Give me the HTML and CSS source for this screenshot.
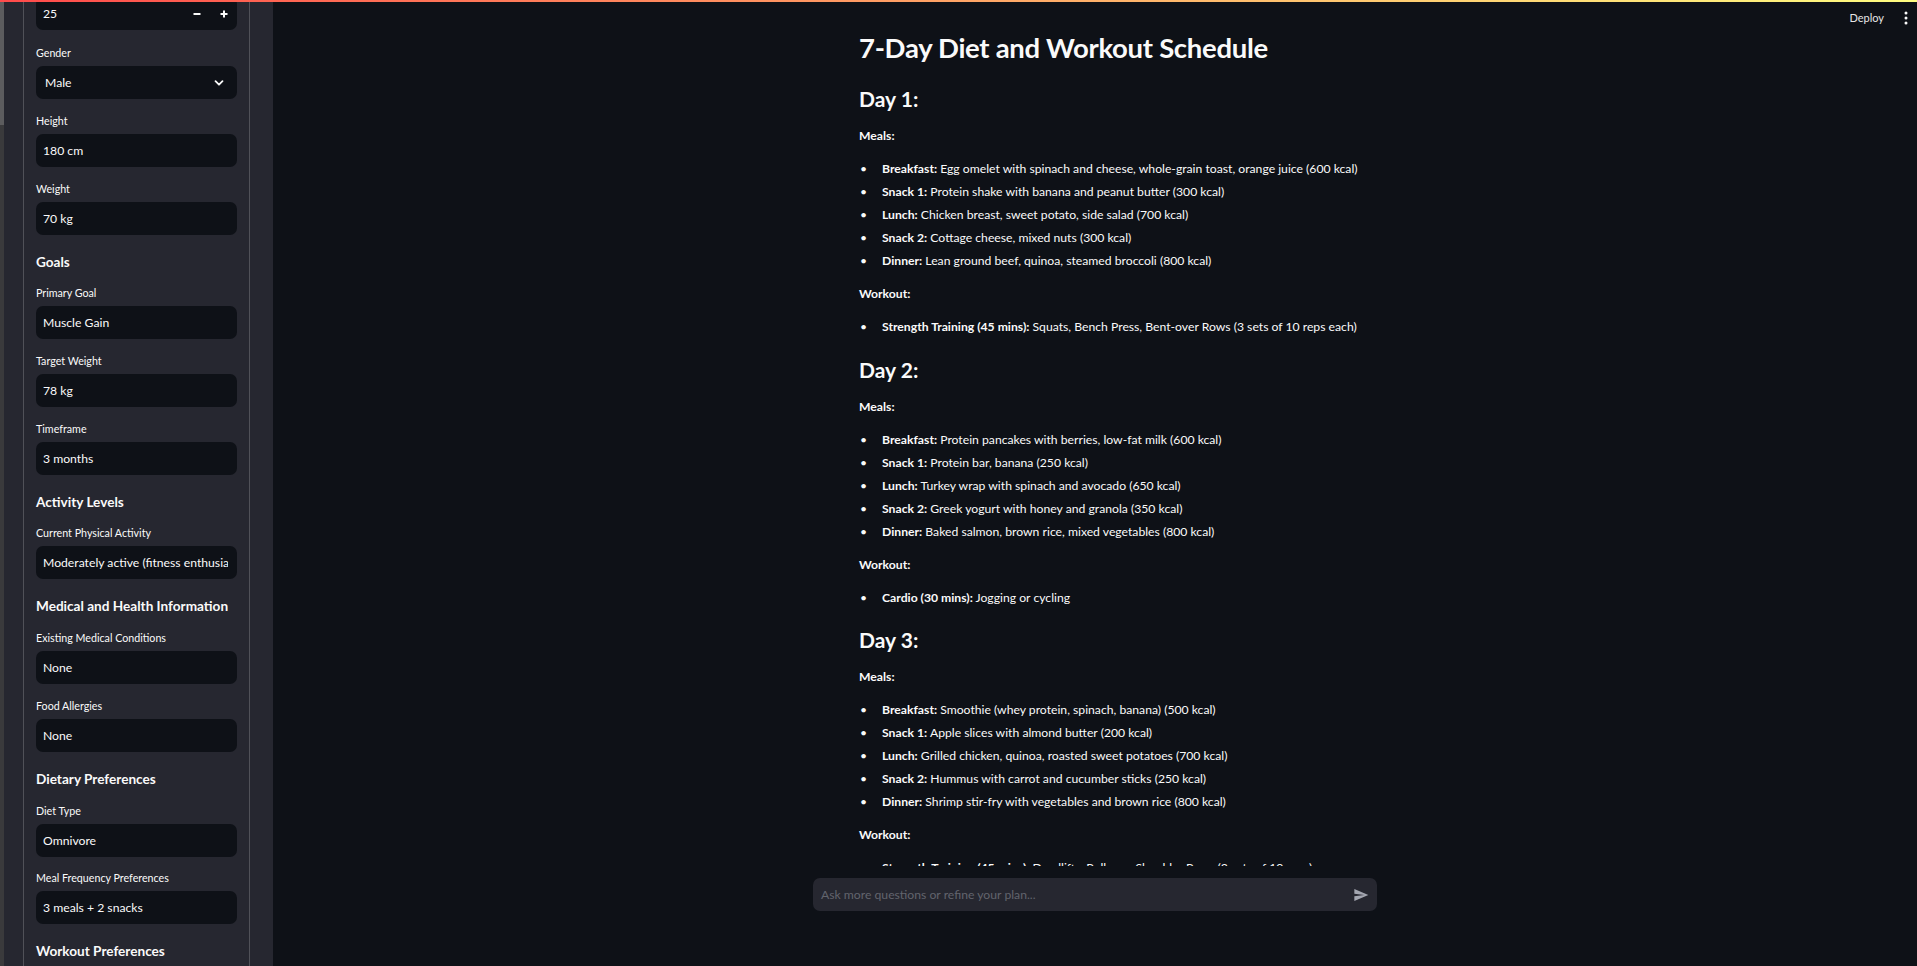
FILE: index.html
```html
<!DOCTYPE html>
<html lang="en">
<head>
<meta charset="utf-8">
<title>AI Diet and Workout Planner</title>
<link rel="stylesheet" href="styles.css">
</head>
<body>
<div class="decoration"></div>
<div class="app">
  <aside class="sidebar">
    <div class="scroll-track"><div class="scroll-thumb"></div></div>
    <div class="sidebar-body">
      <div class="panel">
        <div class="field">
          <label class="field-label">Age</label>
          <div class="input number">
            <span class="value">25</span>
            <span class="step"><svg width="8" height="8" viewBox="0 0 8 8"><rect x="0.5" y="3" width="7" height="2" fill="#fafafa"/></svg></span>
            <span class="step"><svg width="8" height="8" viewBox="0 0 8 8"><rect x="0.5" y="3" width="7" height="2" fill="#fafafa"/><rect x="3" y="0.5" width="2" height="7" fill="#fafafa"/></svg></span>
          </div>
        </div>
        <div class="field after-number">
          <label class="field-label">Gender</label>
          <div class="input select">
            <span class="value">Male</span>
            <svg class="chevron" width="10" height="8" viewBox="0 0 10 8"><path d="M1.5 2.2 5 5.7 8.5 2.2" fill="none" stroke="#fafafa" stroke-width="1.8" stroke-linecap="round" stroke-linejoin="round"/></svg>
          </div>
        </div>
        <div class="field">
          <label class="field-label">Height</label>
          <div class="input"><span class="value">180 cm</span></div>
        </div>
        <div class="field">
          <label class="field-label">Weight</label>
          <div class="input"><span class="value">70 kg</span></div>
        </div>

        <div class="group-title">Goals</div>
        <div class="field">
          <label class="field-label">Primary Goal</label>
          <div class="input"><span class="value">Muscle Gain</span></div>
        </div>
        <div class="field">
          <label class="field-label">Target Weight</label>
          <div class="input"><span class="value">78 kg</span></div>
        </div>
        <div class="field">
          <label class="field-label">Timeframe</label>
          <div class="input"><span class="value">3 months</span></div>
        </div>

        <div class="group-title">Activity Levels</div>
        <div class="field">
          <label class="field-label">Current Physical Activity</label>
          <div class="input"><span class="value">Moderately active (fitness enthusiast, works out 3-4 times a week)</span></div>
        </div>

        <div class="group-title">Medical and Health Information</div>
        <div class="field">
          <label class="field-label">Existing Medical Conditions</label>
          <div class="input"><span class="value">None</span></div>
        </div>
        <div class="field">
          <label class="field-label">Food Allergies</label>
          <div class="input"><span class="value">None</span></div>
        </div>

        <div class="group-title">Dietary Preferences</div>
        <div class="field">
          <label class="field-label">Diet Type</label>
          <div class="input"><span class="value">Omnivore</span></div>
        </div>
        <div class="field">
          <label class="field-label">Meal Frequency Preferences</label>
          <div class="input"><span class="value">3 meals + 2 snacks</span></div>
        </div>

        <div class="group-title">Workout Preferences</div>
        <div class="field">
          <label class="field-label">Preferred Workout Type</label>
          <div class="input"><span class="value">Strength training</span></div>
        </div>
      </div>
    </div>
  </aside>

  <main class="main">
    <header class="toolbar">
      <span class="deploy">Deploy</span>
      <svg class="kebab" width="4" height="14" viewBox="0 0 4 14"><circle cx="2" cy="2" r="1.5" fill="#fafafa"/><circle cx="2" cy="7" r="1.5" fill="#fafafa"/><circle cx="2" cy="12" r="1.5" fill="#fafafa"/></svg>
    </header>

    <div class="scroll-area">
      <div class="column">
        <article class="message">
          <h2 class="title">7-Day Diet and Workout Schedule</h2>

          <h3 class="day">Day 1:</h3>
          <p class="section"><strong>Meals:</strong></p>
          <ul class="items">
            <li><strong>Breakfast:</strong> Egg omelet with spinach and cheese, whole-grain toast, orange juice (600 kcal)</li>
            <li><strong>Snack 1:</strong> Protein shake with banana and peanut butter (300 kcal)</li>
            <li><strong>Lunch:</strong> Chicken breast, sweet potato, side salad (700 kcal)</li>
            <li><strong>Snack 2:</strong> Cottage cheese, mixed nuts (300 kcal)</li>
            <li><strong>Dinner:</strong> Lean ground beef, quinoa, steamed broccoli (800 kcal)</li>
          </ul>
          <p class="section"><strong>Workout:</strong></p>
          <ul class="items">
            <li><strong>Strength Training (45 mins):</strong> Squats, Bench Press, Bent-over Rows (3 sets of 10 reps each)</li>
          </ul>

          <h3 class="day">Day 2:</h3>
          <p class="section"><strong>Meals:</strong></p>
          <ul class="items">
            <li><strong>Breakfast:</strong> Protein pancakes with berries, low-fat milk (600 kcal)</li>
            <li><strong>Snack 1:</strong> Protein bar, banana (250 kcal)</li>
            <li><strong>Lunch:</strong> Turkey wrap with spinach and avocado (650 kcal)</li>
            <li><strong>Snack 2:</strong> Greek yogurt with honey and granola (350 kcal)</li>
            <li><strong>Dinner:</strong> Baked salmon, brown rice, mixed vegetables (800 kcal)</li>
          </ul>
          <p class="section"><strong>Workout:</strong></p>
          <ul class="items">
            <li><strong>Cardio (30 mins):</strong> Jogging or cycling</li>
          </ul>

          <h3 class="day">Day 3:</h3>
          <p class="section"><strong>Meals:</strong></p>
          <ul class="items">
            <li><strong>Breakfast:</strong> Smoothie (whey protein, spinach, banana) (500 kcal)</li>
            <li><strong>Snack 1:</strong> Apple slices with almond butter (200 kcal)</li>
            <li><strong>Lunch:</strong> Grilled chicken, quinoa, roasted sweet potatoes (700 kcal)</li>
            <li><strong>Snack 2:</strong> Hummus with carrot and cucumber sticks (250 kcal)</li>
            <li><strong>Dinner:</strong> Shrimp stir-fry with vegetables and brown rice (800 kcal)</li>
          </ul>
          <p class="section"><strong>Workout:</strong></p>
          <ul class="items">
            <li><strong>Strength Training (45 mins):</strong> Deadlifts, Pull-ups, Shoulder Press (3 sets of 10 reps)</li>
          </ul>

          <h3 class="day">Day 4:</h3>
          <p class="section"><strong>Meals:</strong></p>
        </article>
      </div>
    </div>

    <div class="bottom">
      <div class="chat-input">
        <span class="placeholder">Ask more questions or refine your plan...</span>
        <svg class="send" width="16" height="16" viewBox="0 0 24 24"><path d="M2.01 21 23 12 2.01 3 2 10l15 2-15 2z" fill="#a3a6b0"/></svg>
      </div>
    </div>
  </main>
</div>
</body>
</html>
```

FILE: styles.css
```css
* {
  box-sizing: border-box;
}

html,
body {
  margin: 0;
  height: 100%;
}

body {
  background: #0e1117;
  color: #fafafa;
  font-family: Lato, "Noto Sans", sans-serif;
  overflow: hidden;
}

.decoration {
  position: absolute;
  top: 0;
  left: 0;
  right: 0;
  height: 2px;
  background: linear-gradient(90deg, #ff4b4b, #fffd80);
  z-index: 10;
}

.app {
  display: flex;
  height: 966px;
}

/* ---------- Sidebar ---------- */

.sidebar {
  width: 273px;
  flex: none;
  display: flex;
  background: #262730;
  overflow: hidden;
}

.scroll-track {
  width: 4px;
  flex: none;
  background: #3a3a3c;
}

.scroll-thumb {
  height: 125px;
  background: #5c5c5e;
}

.sidebar-body {
  flex: 1;
  padding-left: 19px;
}

.panel {
  width: 227px;
  margin-top: -37px;
  border: 1px solid rgba(250, 250, 250, 0.2);
  border-radius: 8px;
  padding: 12px;
  display: flex;
  flex-direction: column;
  gap: 13.7px;
}

.field {
  display: flex;
  flex-direction: column;
  gap: 5px;
}

.after-number {
  margin-top: 1.7px;
}

.field-label {
  font-size: 10.7px;
  line-height: 16px;
  color: #fafafa;
}

.input {
  height: 33px;
  background: #0e1117;
  border-radius: 7px;
  display: flex;
  align-items: center;
  padding: 0 9px 0 7px;
  font-size: 12.2px;
}

.input .value {
  flex: 1;
  min-width: 0;
  white-space: nowrap;
  overflow: hidden;
}

.select {
  padding: 0 13px 0 9px;
}

.number {
  padding-right: 0;
}

.step {
  width: 26.5px;
  height: 100%;
  display: flex;
  align-items: center;
  justify-content: center;
}

.group-title {
  font-size: 13.6px;
  font-weight: 700;
  line-height: 20px;
  padding-top: 3.3px;
}

/* ---------- Main ---------- */

.main {
  flex: 1;
  min-width: 0;
  display: flex;
  flex-direction: column;
}

.toolbar {
  height: 30px;
  flex: none;
  display: flex;
  justify-content: flex-end;
  align-items: flex-start;
  gap: 20px;
  padding: 11px 9px 0 0;
}

.deploy {
  font-size: 11px;
  line-height: 14px;
  color: #e6e6e6;
}

.scroll-area {
  flex: 1;
  min-height: 0;
  overflow: hidden;
}

.column {
  width: 564px;
  margin: 0 auto;
  padding: 0 13px 0 46px;
}

.message {
  font-size: 12.2px;
}

.title {
  margin: 0 0 12.8px;
  font-size: 27.5px;
  line-height: 36px;
  font-weight: 700;
  letter-spacing: -0.3px;
}

.day {
  margin: 0 0 12px;
  padding-top: 6.5px;
  font-size: 21px;
  line-height: 28px;
  font-weight: 700;
}

.section {
  margin: 0 0 12px;
  line-height: 21px;
}

.items {
  margin: 0 0 12px;
  padding: 0 0 0 23px;
  list-style: none;
}

.items li {
  line-height: 21px;
  margin-bottom: 2px;
  white-space: nowrap;
}

.items li:last-child {
  margin-bottom: 0;
}

.items li::before {
  content: "\2022";
  display: inline-block;
  width: 22px;
  margin-left: -22px;
}

strong {
  font-weight: 700;
}

.bottom {
  height: 100px;
  flex: none;
  padding-top: 12px;
  background: #0e1117;
}

.chat-input {
  width: 564px;
  height: 33px;
  margin: 0 auto;
  background: #262730;
  border-radius: 7px;
  display: flex;
  align-items: center;
  padding: 0 8px;
}

.placeholder {
  flex: 1;
  font-size: 12.2px;
  color: #62646d;
}
```
